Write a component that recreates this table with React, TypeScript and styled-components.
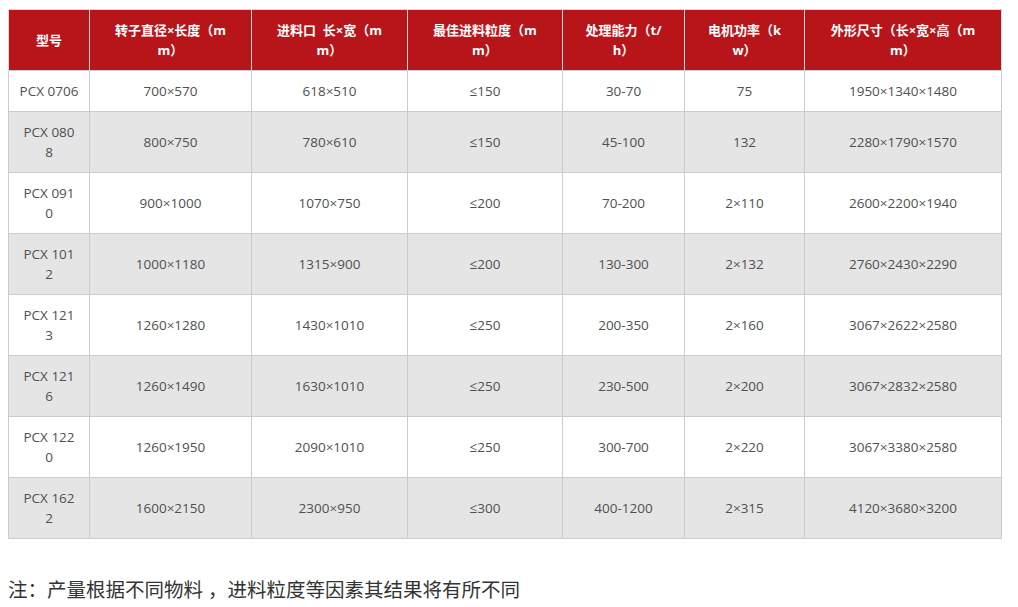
import React from 'react'
import styled, { createGlobalStyle } from 'styled-components'

const GlobalStyle = createGlobalStyle`
  body {
    margin: 0;
    background: #fff;
    font-family: "Open Sans", "Noto Sans CJK SC", sans-serif;
  }
`

interface Row {
  model: string[]
  cells: string[]
}

const columns: { width: number; title: string[] }[] = [
  { width: 81, title: ['型号'] },
  { width: 162, title: ['转子直径×长度（m', 'm）'] },
  { width: 156, title: ['进料口\u00a0\u00a0长×宽（m', 'm）'] },
  { width: 155, title: ['最佳进料粒度（m', 'm）'] },
  { width: 122, title: ['处理能力（t/', 'h）'] },
  { width: 120, title: ['电机功率（k', 'w）'] },
  { width: 197, title: ['外形尺寸（长×宽×高（m', 'm）'] },
]

const rows: Row[] = [
  { model: ['PCX 0706'], cells: ['700×570', '618×510', '≤150', '30-70', '75', '1950×1340×1480'] },
  { model: ['PCX 080', '8'], cells: ['800×750', '780×610', '≤150', '45-100', '132', '2280×1790×1570'] },
  { model: ['PCX 091', '0'], cells: ['900×1000', '1070×750', '≤200', '70-200', '2×110', '2600×2200×1940'] },
  { model: ['PCX 101', '2'], cells: ['1000×1180', '1315×900', '≤200', '130-300', '2×132', '2760×2430×2290'] },
  { model: ['PCX 121', '3'], cells: ['1260×1280', '1430×1010', '≤250', '200-350', '2×160', '3067×2622×2580'] },
  { model: ['PCX 121', '6'], cells: ['1260×1490', '1630×1010', '≤250', '230-500', '2×200', '3067×2832×2580'] },
  { model: ['PCX 122', '0'], cells: ['1260×1950', '2090×1010', '≤250', '300-700', '2×220', '3067×3380×2580'] },
  { model: ['PCX 162', '2'], cells: ['1600×2150', '2300×950', '≤300', '400-1200', '2×315', '4120×3680×3200'] },
]

function Lines({ parts }: { parts: string[] }): JSX.Element {
  return (
    <>
      {parts.map((p, i) => (
        <React.Fragment key={i}>
          {i > 0 && <br />}
          {p}
        </React.Fragment>
      ))}
    </>
  )
}

export default function App(): JSX.Element {
  return (
    <Page>
      <GlobalStyle />
      <Table>
        <colgroup>
          {columns.map((c, i) => (
            <col key={i} style={{ width: c.width }} />
          ))}
        </colgroup>
        <thead>
          <tr>
            {columns.map((c, i) => (
              <HeadCell key={i}>
                <Lines parts={c.title} />
              </HeadCell>
            ))}
          </tr>
        </thead>
        <tbody>
          {rows.map((r, i) => (
            <BodyRow key={i} $striped={i % 2 === 1}>
              <Cell>
                <Lines parts={r.model} />
              </Cell>
              {r.cells.map((c, j) => (
                <Cell key={j}>{c}</Cell>
              ))}
            </BodyRow>
          ))}
        </tbody>
      </Table>
      <Note>注：产量根据不同物料 ，进料粒度等因素其结果将有所不同</Note>
    </Page>
  )
}

const Page = styled.div`
  padding: 9px 8px 0 8px;
`

const Table = styled.table`
  border-collapse: collapse;
  table-layout: fixed;
  width: 993px;
  font-size: 13px;
  line-height: 20px;
`

const HeadCell = styled.th`
  background: #b8151b;
  color: #fff;
  font-weight: 700;
  text-align: center;
  padding: 10px 6px;
  border: 1px solid #d9d9d9;
  border-bottom: none;
`

const BodyRow = styled.tr<{ $striped: boolean }>`
  background: ${(p) => (p.$striped ? '#e5e5e5' : '#fff')};
`

const Cell = styled.td`
  color: #505050;
  font-size: 13.5px;
  text-align: center;
  padding: 10px 6px;
  border: 1px solid #cccccc;
`

const Note = styled.div`
  margin-top: 37px;
  font-size: 19.5px;
  line-height: 27px;
  color: #333;
`
